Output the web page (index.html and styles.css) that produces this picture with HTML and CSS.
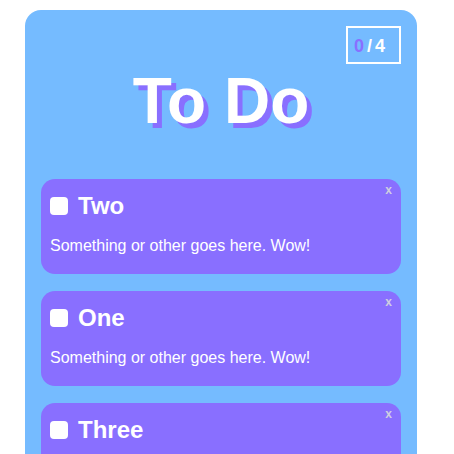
FILE: index.html
```html
<!DOCTYPE html>
<html>
<head>
<meta charset="utf-8">
<link rel="stylesheet" href="styles.css">
</head>
<body>
<div class="panel">
  <div class="top">
    <div class="counter"><span class="done">0</span>/4</div>
  </div>
  <h1 class="title">To Do</h1>
  <div class="list">
    <div class="card">
      <span class="close">x</span>
      <div class="row"><span class="check"></span><span class="name">Two</span></div>
      <p class="desc">Something or other goes here. Wow!</p>
    </div>
    <div class="card">
      <span class="close">x</span>
      <div class="row"><span class="check"></span><span class="name">One</span></div>
      <p class="desc">Something or other goes here. Wow!</p>
    </div>
    <div class="card">
      <span class="close">x</span>
      <div class="row"><span class="check"></span><span class="name">Three</span></div>
      <p class="desc">Something or other goes here. Wow!</p>
    </div>
  </div>
</div>
</body>
</html>
```
FILE: styles.css
```css
html, body {
  margin: 0;
  padding: 0;
  background: #fff;
  font-family: "Liberation Sans", Arial, sans-serif;
}
body {
  padding: 10px 0 0 25px;
}
.panel {
  width: 392px;
  min-height: 600px;
  background: #75bbff;
  border-radius: 16px;
  padding: 16px;
  box-sizing: border-box;
}
.top {
  display: flex;
  justify-content: flex-end;
}
.counter {
  width: 55px;
  height: 38px;
  box-sizing: border-box;
  border: 2px solid #fff;
  display: flex;
  align-items: center;
  justify-content: center;
  padding: 2px 5px 0 0;
  color: #fff;
  font-weight: bold;
  font-size: 18px;
  letter-spacing: 3px;
}
.counter .done {
  color: #896fff;
}
.title {
  margin: 5px 0 0;
  font-size: 64px;
  line-height: 64px;
  text-align: center;
  color: #fff;
  font-weight: bold;
  text-shadow: 5px 5px 0 #896fff;
}
.list {
  margin-top: 46px;
  display: flex;
  flex-direction: column;
  gap: 17px;
}
.card {
  position: relative;
  background: #896fff;
  border-radius: 14px;
  padding: 13px 12px 18px 9px;
  color: #fff;
}
.close {
  position: absolute;
  top: 4px;
  right: 9px;
  font-size: 12px;
  font-weight: bold;
  color: #cfcfe0;
}
.row {
  display: flex;
  align-items: center;
  height: 28px;
  gap: 10px;
}
.check {
  width: 18px;
  height: 18px;
  background: #fff;
  border-radius: 4px;
}
.name {
  font-size: 24px;
  line-height: 28px;
  font-weight: bold;
}
.desc {
  margin: 16px 0 0;
  font-size: 16px;
  line-height: 20px;
}
```
